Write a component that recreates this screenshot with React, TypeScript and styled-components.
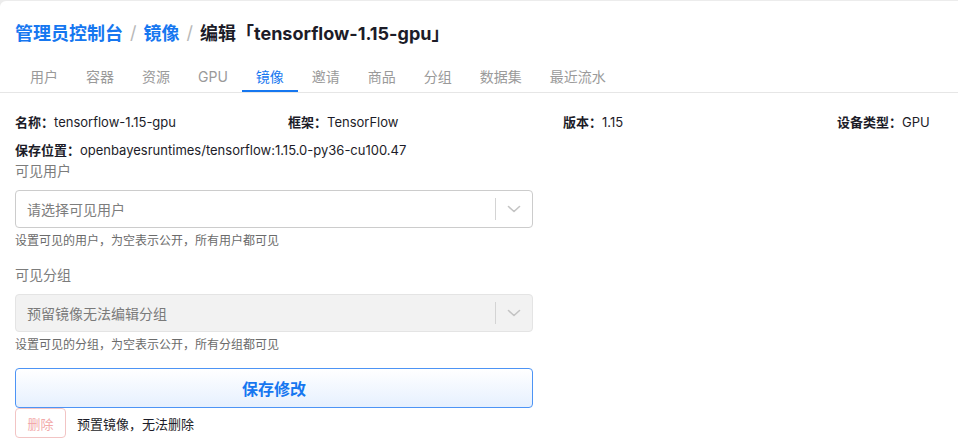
import React from "react";
import styled, { createGlobalStyle } from "styled-components";

const Global = createGlobalStyle`
  html, body { margin: 0; padding: 0; background: #ececec; }
  body { font-family: Inter, "Noto Sans CJK SC", sans-serif; color: #1f1f1f; }
  * { box-sizing: border-box; }
`;

const Page = styled.div`
  margin-top: 1px;
  background: #fff;
  border-top-left-radius: 6px;
  min-height: 442px;
`;

const Breadcrumb = styled.div`
  display: flex;
  align-items: center;
  height: 62px;
  padding: 0 15px;
  font-size: 18px;
  font-weight: 700;
`;

const Crumb = styled.span<{ $link?: boolean }>`
  color: ${(p) => (p.$link ? "#1677f0" : "#1c1c28")};
`;

const Sep = styled.span`
  color: #b8b8b8;
  font-weight: 400;
  margin: 0 7px;
`;

const Tabs = styled.div`
  display: flex;
  padding: 0 16px;
  border-bottom: 1px solid #e6e6e6;
  height: 30px;
`;

const Tab = styled.div<{ $active?: boolean }>`
  padding: 0 14px;
  font-size: 14px;
  line-height: 28px;
  color: ${(p) => (p.$active ? "#1677f0" : "#9a9a9a")};
  border-bottom: 2px solid ${(p) => (p.$active ? "#1677f0" : "transparent")};
`;

const Body = styled.div`
  padding: 19px 15px 0;
`;

const InfoGrid = styled.div`
  display: grid;
  grid-template-columns: 273px 275px 274px 1fr;
  font-size: 13px;
  line-height: 20px;
`;

const Info = styled.div`
  color: #1c1c28;
  white-space: nowrap;
  margin-bottom: 8px;
`;

const Key = styled.span`
  font-weight: 700;
`;

const Form = styled.div`
  width: 518px;
`;

const Label = styled.div`
  font-size: 14px;
  color: #7c7c7c;
  line-height: 20px;
  margin-top: -7px;
  margin-bottom: 9px;
`;

const Select = styled.div<{ $disabled?: boolean }>`
  display: flex;
  align-items: center;
  height: 38px;
  border: 1px solid ${(p) => (p.$disabled ? "#e4e4e4" : "#cccccc")};
  background: ${(p) => (p.$disabled ? "#f2f2f2" : "#fff")};
  border-radius: 4px;
  padding-left: 11px;
`;

const Placeholder = styled.div<{ $disabled?: boolean }>`
  flex: 1;
  font-size: 14px;
  color: ${(p) => (p.$disabled ? "#7a7a7a" : "#7d7d7d")};
`;

const Divider = styled.div`
  width: 1px;
  height: 22px;
  background: #d4d4d4;
`;

const Arrow = styled.div`
  width: 36px;
  display: flex;
  align-items: center;
  justify-content: center;
  color: #c4c4c4;
`;

const Hint = styled.div<{ $last?: boolean }>`
  font-size: 12px;
  color: #6b6b6b;
  line-height: 16px;
  margin-top: 5px;
  margin-bottom: ${(p) => (p.$last ? "15px" : "23px")};
`;

const SaveButton = styled.button`
  display: block;
  width: 100%;
  height: 40px;
  border: 1px solid #4d94f5;
  border-radius: 4px;
  background: linear-gradient(#ffffff, #e6f0fe);
  color: #1677f0;
  font-family: inherit;
  font-size: 16px;
  font-weight: 700;
`;

const DeleteRow = styled.div`
  display: flex;
  align-items: center;
  gap: 11px;
`;

const DeleteButton = styled.button`
  width: 51px;
  height: 30px;
  border: 1px solid #f2c4c4;
  border-radius: 4px;
  background: #fff;
  color: #f2a9a9;
  font-family: inherit;
  font-size: 13px;
`;

const DeleteNote = styled.span`
  font-size: 13px;
  color: #1c1c28;
`;

const Chevron = () => (
  <svg width="14" height="8" viewBox="0 0 14 8" fill="none" stroke="currentColor" strokeWidth="1.6" strokeLinecap="round" strokeLinejoin="round">
    <polyline points="1.5,1.5 7,6.5 12.5,1.5" />
  </svg>
);

const tabs = ["用户", "容器", "资源", "GPU", "镜像", "邀请", "商品", "分组", "数据集", "最近流水"];

export default function App() {
  return (
    <>
      <Global />
      <Page>
        <Breadcrumb>
          <Crumb $link>管理员控制台</Crumb>
          <Sep>/</Sep>
          <Crumb $link>镜像</Crumb>
          <Sep>/</Sep>
          <Crumb>编辑「tensorflow-1.15-gpu」</Crumb>
        </Breadcrumb>
        <Tabs>
          {tabs.map((t) => (
            <Tab key={t} $active={t === "镜像"}>
              {t}
            </Tab>
          ))}
        </Tabs>
        <Body>
          <InfoGrid>
            <Info>
              <Key>名称：</Key>tensorflow-1.15-gpu
            </Info>
            <Info>
              <Key>框架：</Key>TensorFlow
            </Info>
            <Info>
              <Key>版本：</Key>1.15
            </Info>
            <Info>
              <Key>设备类型：</Key>GPU
            </Info>
            <Info>
              <Key>保存位置：</Key>openbayesruntimes/tensorflow:1.15.0-py36-cu100.47
            </Info>
          </InfoGrid>
          <Form>
            <Label>可见用户</Label>
            <Select>
              <Placeholder>请选择可见用户</Placeholder>
              <Divider />
              <Arrow>
                <Chevron />
              </Arrow>
            </Select>
            <Hint>设置可见的用户，为空表示公开，所有用户都可见</Hint>
            <Label>可见分组</Label>
            <Select $disabled>
              <Placeholder $disabled>预留镜像无法编辑分组</Placeholder>
              <Divider />
              <Arrow>
                <Chevron />
              </Arrow>
            </Select>
            <Hint $last>设置可见的分组，为空表示公开，所有分组都可见</Hint>
            <SaveButton>保存修改</SaveButton>
            <DeleteRow>
              <DeleteButton>删除</DeleteButton>
              <DeleteNote>预置镜像，无法删除</DeleteNote>
            </DeleteRow>
          </Form>
        </Body>
      </Page>
    </>
  );
}
